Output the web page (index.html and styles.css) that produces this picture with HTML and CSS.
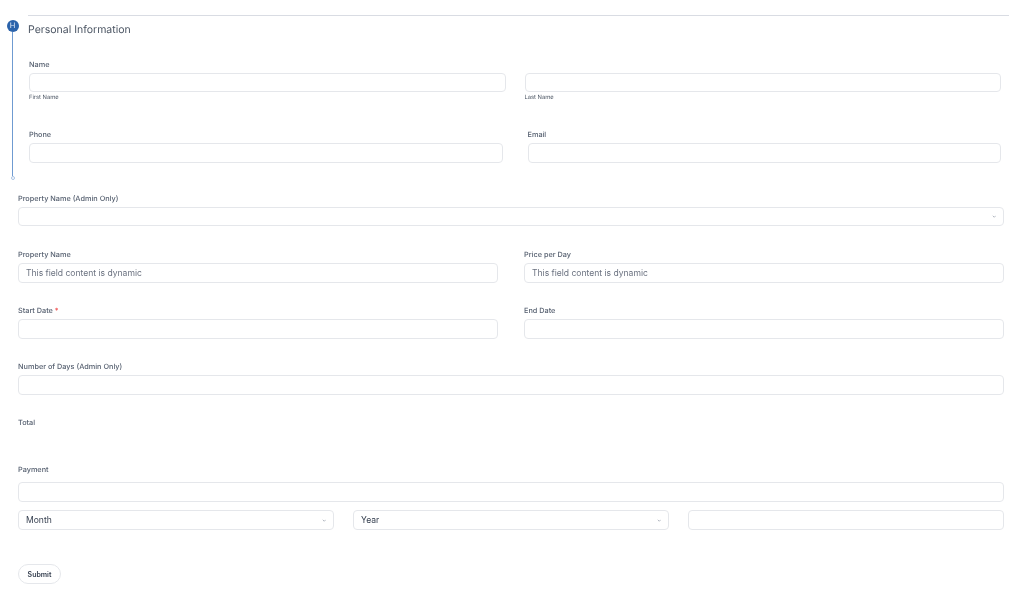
FILE: index.html
```html
<!DOCTYPE html>
<html lang="en">
<head>
<meta charset="utf-8">
<title>Personal Information</title>
<link rel="stylesheet" href="styles.css">
</head>
<body>
<form class="page">
  <section class="step">
    <div class="rail">
      <span class="badge">H</span>
      <span class="rail-line"></span>
      <span class="rail-end"></span>
    </div>
    <div class="step-body">
      <h2 class="step-title">Personal Information</h2>
      <div class="name-block">
        <div class="label">Name</div>
        <div class="row gap-name">
          <div class="col"><input class="field" type="text"><div class="hint">First Name</div></div>
          <div class="col"><input class="field" type="text"><div class="hint">Last Name</div></div>
        </div>
      </div>
      <div class="row gap-contact contact-block">
        <div class="col"><label class="label">Phone</label><input class="field" type="text"></div>
        <div class="col"><label class="label">Email</label><input class="field" type="text"></div>
      </div>
    </div>
  </section>

  <div class="main">
    <div class="block admin-block">
      <label class="label">Property Name (Admin Only)</label>
      <div class="select-wrap">
        <select class="field select"><option></option></select>
        <svg class="chev" viewBox="0 0 6 4"><path d="M1 1l2 2 2-2" fill="none" stroke="#9ca3af" stroke-width="1"/></svg>
      </div>
    </div>
    <div class="row gap-wide block">
      <div class="col"><label class="label">Property Name</label><input class="field dynamic" type="text" value="This field content is dynamic"></div>
      <div class="col"><label class="label">Price per Day</label><input class="field dynamic" type="text" value="This field content is dynamic"></div>
    </div>
    <div class="row gap-wide block">
      <div class="col"><label class="label">Start Date <span class="req">*</span></label><input class="field" type="text"></div>
      <div class="col"><label class="label">End Date</label><input class="field" type="text"></div>
    </div>
    <div class="block">
      <label class="label">Number of Days (Admin Only)</label>
      <input class="field" type="text">
    </div>
    <div class="total-block">
      <div class="label">Total</div>
    </div>
    <div class="payment-block">
      <label class="label payment-label">Payment</label>
      <input class="field" type="text">
      <div class="row gap-card card-row">
        <div class="col select-wrap">
          <select class="field select"><option>Month</option></select>
          <svg class="chev" viewBox="0 0 6 4"><path d="M1 1l2 2 2-2" fill="none" stroke="#9ca3af" stroke-width="1"/></svg>
        </div>
        <div class="col select-wrap">
          <select class="field select"><option>Year</option></select>
          <svg class="chev" viewBox="0 0 6 4"><path d="M1 1l2 2 2-2" fill="none" stroke="#9ca3af" stroke-width="1"/></svg>
        </div>
        <div class="col"><input class="field" type="text"></div>
      </div>
    </div>
    <button class="submit" type="button">Submit</button>
  </div>
</form>
</body>
</html>
```

FILE: styles.css
```css
* { box-sizing: border-box; }
html, body { margin: 0; padding: 0; background: #fff; }
body { font-family: Inter, "Liberation Sans", sans-serif; color: #4b5563; overflow: hidden; text-rendering: geometricPrecision; }
.page { padding-top: 15px; height: 594px; filter: blur(0.3px); }

.step { display: flex; padding: 0 15px 0 6px; height: 165px; }
.rail { flex: none; display: flex; flex-direction: column; align-items: center; width: 13px; padding-top: 5px; margin-right: 9px; }
.badge { width: 12px; height: 12px; border-radius: 50%; background: #2b63ab; color: #e3ecf8; font-size: 7.5px; line-height: 12px; text-align: center; flex: none; }
.rail-line { width: 1px; flex: 1; background: #6f9bd1; }
.rail-end { width: 4px; height: 4px; border-radius: 50%; border: 1px solid #a9c3e3; flex: none; }
.step-body { flex: 1; min-width: 0; border-top: 1px solid #d9dce3; }
.step-title { margin: 0; font-size: 10.5px; line-height: 14px; font-weight: 400; padding-top: 7px; color: #4b5563; }
.name-block { padding: 0 8px 0 1px; margin-top: 22.5px; }
.contact-block { padding: 0 8px 0 1px; margin-top: 28.5px; }

.label { display: block; font-size: 7.3px; line-height: 9px; margin-bottom: 4px; color: #566070; font-weight: 500; }
.row { display: flex; }
.col { flex: 1 1 0; min-width: 0; }
.gap-name { gap: 19px; }
.gap-contact { gap: 25px; }
.gap-wide { gap: 26px; }
.gap-card { gap: 19px; }
.hint { font-size: 5.8px; line-height: 8px; margin-top: 1.5px; color: #4b5563; }

.field { display: block; width: 100%; height: 19.5px; border: 1px solid #e5e7eb; border-radius: 4px; background: #fff; padding: 0 7px; font: 400 8.55px Inter, "Liberation Sans", sans-serif; color: #374151; outline: none; }
.dynamic { color: #6b7280; }
.select { appearance: none; -webkit-appearance: none; padding-right: 20px; }
.select-wrap { position: relative; }
.chev { position: absolute; right: 8px; bottom: 8px; width: 4.5px; height: 3px; }

.main { padding: 0 20px 0 18px; }
.block { margin-bottom: 23.5px; }
.block.admin-block { margin-top: 13.5px; margin-bottom: 24px; }
.req { color: #ef4444; }
.total-block { height: 46.5px; }
.payment-block { margin-bottom: 34.5px; }
.payment-label { margin-bottom: 8.5px; }
.card-row { margin-top: 8.5px; }
.submit { display: block; width: 43px; height: 20px; border: 1px solid #e5e7eb; border-radius: 10px; background: #fff; font: 600 7px Inter, "Liberation Sans", sans-serif; color: #374151; padding: 0; }
```
